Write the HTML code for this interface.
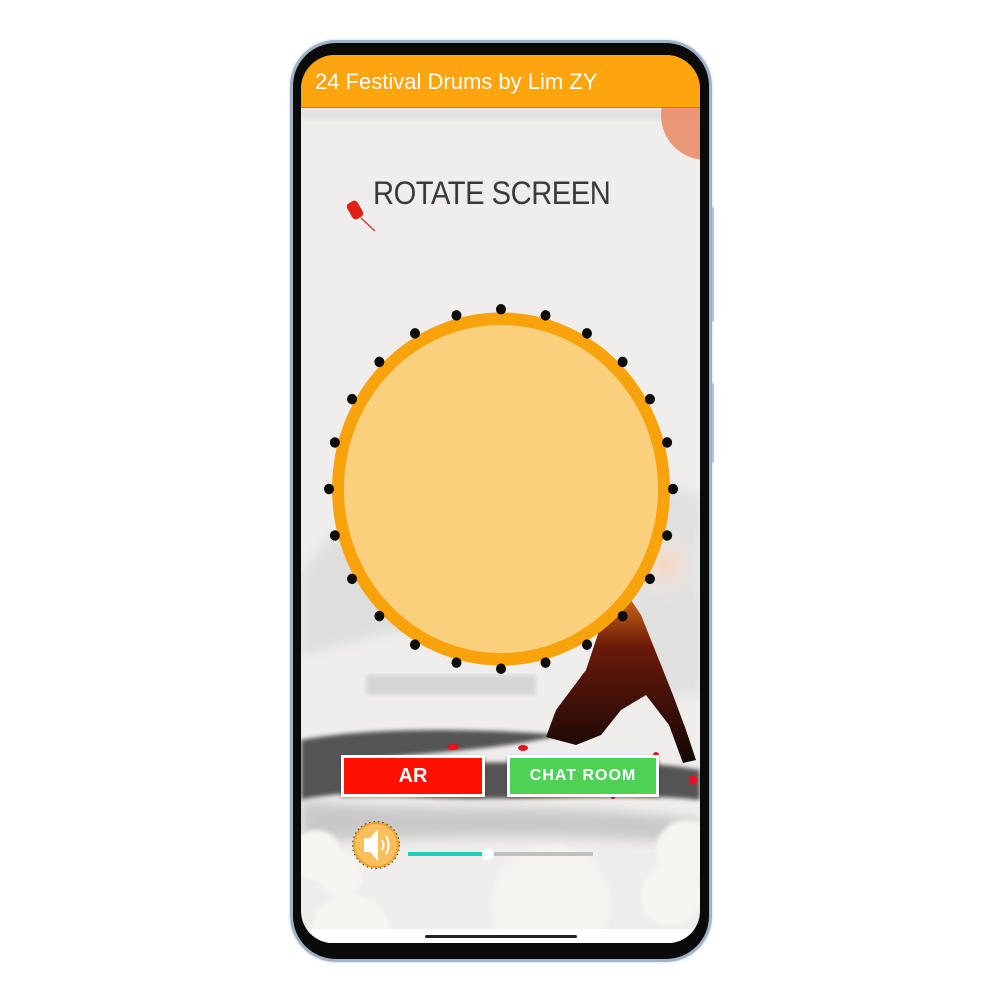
<!DOCTYPE html>
<html><head><meta charset="utf-8"><style>
html,body{margin:0;padding:0;background:#fff;width:1000px;height:1000px;overflow:hidden;font-family:"Liberation Sans",sans-serif}
.frame{position:absolute;left:290px;top:40px;width:422px;height:922px;border-radius:46px;background:#9fb3c8;box-shadow:0 0 3px #c8d4e0}
.black{position:absolute;left:293px;top:43px;width:416px;height:916px;border-radius:43px;background:#0a0a0a}
.screen{position:absolute;left:301px;top:55px;width:399px;height:888px;border-radius:34px 34px 32px 32px;overflow:hidden;background:#efeeed}
.hdr{position:absolute;left:0;top:0;width:399px;height:53px;background:#fda40e;color:#fff;font-size:22px;line-height:53px;padding-left:14px;box-sizing:border-box;border-bottom:1px solid #b08040}
.rot{position:absolute;left:72px;top:120px;font-size:32px;color:#3a3a3a;letter-spacing:-0.5px;transform:scaleX(0.91);transform-origin:left}
.btn{position:absolute;top:700px;height:42px;box-sizing:border-box;border:3px solid #fff;color:#fff;font-weight:bold;text-align:center;line-height:36px;box-shadow:0 1px 3px rgba(0,0,0,.3)}
.side{position:absolute;left:710px;width:4px;background:#a9bccf;border-radius:2px}
</style></head><body>
<div class="side" style="top:207px;height:115px"></div>
<div class="side" style="top:383px;height:80px"></div>
<div class="frame"></div><div class="black"></div>
<div class="screen">
<svg width="399" height="888" style="position:absolute;left:0;top:0">
<defs>
<radialGradient id="glow" cx="0.5" cy="0.5" r="0.5"><stop offset="0" stop-color="#f7d6c0"/><stop offset="1" stop-color="#efeeed" stop-opacity="0"/></radialGradient>
<linearGradient id="fig" x1="0" y1="0" x2="0" y2="1"><stop offset="0" stop-color="#e27a1a"/><stop offset=".35" stop-color="#6a1a08"/><stop offset="1" stop-color="#120606"/></linearGradient>
<filter id="bl"><feGaussianBlur stdDeviation="6"/></filter>
<filter id="bl2"><feGaussianBlur stdDeviation="2"/></filter>
</defs>
<rect x="0" y="53" width="399" height="12" fill="#e4e2e2" filter="url(#bl2)"/>
<circle cx="405" cy="60" r="45" fill="#e8825a" opacity=".8"/>
<path d="M0 520 L30 480 L60 500 L90 460 L130 520 L160 560 L0 600Z" fill="#dedede" filter="url(#bl)"/>
<path d="M330 480 L370 430 L399 440 L399 640 L330 640Z" fill="#e0e0e0" filter="url(#bl)"/>
<circle cx="365" cy="510" r="40" fill="url(#glow)"/>
<path d="M65 620 L235 620 L235 640 L65 640Z" fill="#d6d6d6" filter="url(#bl2)"/>
<path d="M0 685 C80 670 200 675 260 680 C200 695 120 698 60 705 C200 712 320 700 399 715 L399 745 C300 735 200 750 100 740 C60 736 20 740 0 745Z" fill="#3a3a3a" filter="url(#bl2)" opacity=".85"/>
<path d="M0 745 C120 760 260 745 399 765 L399 790 C250 775 120 785 0 785Z" fill="#b0b0b0" filter="url(#bl)" opacity=".6"/>
<path d="M320 530 L340 560 L352 590 L372 640 L385 675 L395 705 L382 708 L368 670 L345 640 L320 655 L300 680 L275 690 L245 682 L255 655 L285 615 L300 570Z" fill="url(#fig)"/>
<g fill="#e8101a"><ellipse cx="152" cy="692" rx="6" ry="3"/><ellipse cx="222" cy="693" rx="5" ry="3"/><ellipse cx="300" cy="715" rx="3" ry="6"/><ellipse cx="325" cy="720" rx="4" ry="3"/><ellipse cx="340" cy="732" rx="5" ry="3"/><ellipse cx="312" cy="740" rx="3" ry="4"/><ellipse cx="392" cy="725" rx="4" ry="5"/><ellipse cx="355" cy="700" rx="3" ry="3"/></g>
<g fill="#f7f5f0" filter="url(#bl2)"><circle cx="15" cy="800" r="25"/><circle cx="40" cy="820" r="22"/><circle cx="385" cy="795" r="30"/><circle cx="370" cy="840" r="30"/><circle cx="50" cy="880" r="40"/><circle cx="250" cy="850" r="60" opacity=".7"/></g>
<rect x="48" y="146" width="12" height="18" rx="4" fill="#e02015" transform="rotate(-30 54 155)"/>
<line x1="60" y1="163" x2="74" y2="176" stroke="#d03030" stroke-width="1.2"/>
<g transform="translate(200,434) scale(1,1.045)">
<circle r="169" fill="#f9a30c"/>
<circle r="157" fill="#fbd07d"/>
<g fill="#0b0b0b">
<circle cx="0" cy="-172" r="5"/><circle cx="0" cy="-172" r="5" transform="rotate(15)"/><circle cx="0" cy="-172" r="5" transform="rotate(30)"/><circle cx="0" cy="-172" r="5" transform="rotate(45)"/><circle cx="0" cy="-172" r="5" transform="rotate(60)"/><circle cx="0" cy="-172" r="5" transform="rotate(75)"/><circle cx="0" cy="-172" r="5" transform="rotate(90)"/><circle cx="0" cy="-172" r="5" transform="rotate(105)"/><circle cx="0" cy="-172" r="5" transform="rotate(120)"/><circle cx="0" cy="-172" r="5" transform="rotate(135)"/><circle cx="0" cy="-172" r="5" transform="rotate(150)"/><circle cx="0" cy="-172" r="5" transform="rotate(165)"/><circle cx="0" cy="-172" r="5" transform="rotate(180)"/><circle cx="0" cy="-172" r="5" transform="rotate(195)"/><circle cx="0" cy="-172" r="5" transform="rotate(210)"/><circle cx="0" cy="-172" r="5" transform="rotate(225)"/><circle cx="0" cy="-172" r="5" transform="rotate(240)"/><circle cx="0" cy="-172" r="5" transform="rotate(255)"/><circle cx="0" cy="-172" r="5" transform="rotate(270)"/><circle cx="0" cy="-172" r="5" transform="rotate(285)"/><circle cx="0" cy="-172" r="5" transform="rotate(300)"/><circle cx="0" cy="-172" r="5" transform="rotate(315)"/><circle cx="0" cy="-172" r="5" transform="rotate(330)"/><circle cx="0" cy="-172" r="5" transform="rotate(345)"/>
</g></g>
<circle cx="75" cy="790" r="22" fill="#fbbf5e" stroke="#f5a020" stroke-width="2"/>
<circle cx="75" cy="790" r="23.5" fill="none" stroke="#333" stroke-width="1" stroke-dasharray="1.5 3"/>
<path d="M63 783 L69 783 L77 774 L77 806 L69 797 L63 797Z" fill="#fff"/>
<path d="M81 785 Q84 790 81 795 M85 781 Q90 790 85 799" stroke="#fff" stroke-width="2" fill="none"/>
<rect x="107" y="797" width="185" height="4" fill="#c0c0c0"/>
<rect x="107" y="797" width="80" height="4" fill="#1ecfc0"/>
<circle cx="187" cy="799" r="6" fill="#fff"/>
<rect x="0" y="874" width="399" height="14" fill="#fff"/>
<rect x="124" y="880" width="152" height="3" rx="1.5" fill="#222"/>
</svg>
<div class="hdr">24 Festival Drums by Lim ZY</div>
<div class="rot">ROTATE SCREEN</div>
<div class="btn" style="left:40px;width:144px;background:#fd1000;font-size:20px">AR</div>
<div class="btn" style="left:206px;width:152px;background:#4ed256;font-size:16px;letter-spacing:1px">CHAT ROOM</div>
</div>
</body></html>
